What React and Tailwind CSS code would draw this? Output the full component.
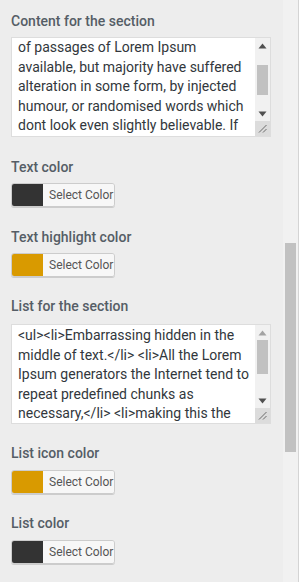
import React from "react";

const contentLines = [
  "of passages of Lorem Ipsum",
  "available, but majority have suffered",
  "alteration in some form, by injected",
  "humour, or randomised words which",
  "dont look even slightly believable. If",
  "you are going to use a passage of",
];

const listLines = [
  "<ul><li>Embarrassing hidden in the",
  "middle of text.</li> <li>All the Lorem",
  "Ipsum generators the Internet tend to",
  "repeat predefined chunks as",
  "necessary,</li> <li>making this the",
  "most true generator on the Internet.",
];

const Arrow = ({ up, light }) => (
  <svg width="9" height="6" viewBox="0 0 9 6" className="mx-auto">
    <polygon
      points={up ? "4.5,0.5 8.5,5.5 0.5,5.5" : "0.5,0.5 8.5,0.5 4.5,5.5"}
      fill={light ? "#a3a3a3" : "#505050"}
    />
  </svg>
);

const TextBox = ({ lines, offset, thumbTop, thumbHeight, upLight }) => (
  <div className="flex h-[100px] w-[260px] border border-[#dddddd] bg-white">
    <div className="flex-1 overflow-hidden pl-[6px]">
      <div className={offset}>
        {lines.map((line) => (
          <div key={line} className="whitespace-nowrap text-[14px] leading-[19.5px] text-[#32373c]">
            {line}
          </div>
        ))}
      </div>
    </div>
    <div className="flex w-[15px] flex-col bg-[#f1f1f1]">
      <div className="flex h-[15px] items-center">
        <Arrow up light={upLight} />
      </div>
      <div className="relative flex-1">
        <div
          className="absolute left-[2px] right-[2px] bg-[#c1c1c1]"
          style={{ top: thumbTop, height: thumbHeight }}
        />
      </div>
      <div className="flex h-[15px] items-center">
        <Arrow />
      </div>
      <div className="flex h-[15px] items-center justify-center bg-[#dcdcdc]">
        <svg width="9" height="9" viewBox="0 0 9 9">
          <line x1="1" y1="8.5" x2="8.5" y2="1" stroke="#6a6a6a" strokeWidth="1" />
          <line x1="5" y1="8.5" x2="8.5" y2="5" stroke="#6a6a6a" strokeWidth="1" />
        </svg>
      </div>
    </div>
  </div>
);

const ColorButton = ({ color }) => (
  <div className="flex h-[24px] w-[104px] overflow-hidden rounded-[3px] border border-[#cccccc] shadow-[0_1px_0_#cccccc]">
    <div className="w-[31px]" style={{ background: color }} />
    <div className="flex flex-1 items-center bg-[#f7f7f7] pl-[6px] text-[12px] text-[#555555]">
      Select Color
    </div>
  </div>
);

const Label = ({ children }) => (
  <div className="text-[14px] font-medium leading-[20px] text-[#555d66]">{children}</div>
);

export default function App() {
  return (
    <div
      className="flex h-[582px] w-[299px] overflow-hidden bg-[#ededed]"
      style={{ fontFamily: "Roboto, 'Liberation Sans', sans-serif" }}
    >
      <div className="flex-1 pl-[11px] pt-[11px]">
        <Label>Content for the section</Label>
        <div className="mt-[6px]">
          <TextBox lines={contentLines} offset="mt-0" thumbTop={12} thumbHeight={30} />
        </div>

        <div className="mt-[20px]">
          <Label>Text color</Label>
          <div className="mt-[6px]">
            <ColorButton color="#333333" />
          </div>
        </div>

        <div className="mt-[20px]">
          <Label>Text highlight color</Label>
          <div className="mt-[6px]">
            <ColorButton color="#d99a00" />
          </div>
        </div>

        <div className="mt-[19px]">
          <Label>List for the section</Label>
          <div className="mt-[8px]">
            <TextBox lines={listLines} offset="pt-[1px]" thumbTop={0} thumbHeight={34} upLight />
          </div>
        </div>

        <div className="mt-[19px]">
          <Label>List icon color</Label>
          <div className="mt-[7px]">
            <ColorButton color="#d99a00" />
          </div>
        </div>

        <div className="mt-[19px]">
          <Label>List color</Label>
          <div className="mt-[7px]">
            <ColorButton color="#333333" />
          </div>
        </div>
      </div>

      <div className="w-[16px] border-r border-[#d4d4d4] bg-[#f1f1f1] pl-[2px] pr-[2px]">
        <div className="mt-[243px] h-[209px] bg-[#c1c1c1]" />
      </div>
    </div>
  );
}
